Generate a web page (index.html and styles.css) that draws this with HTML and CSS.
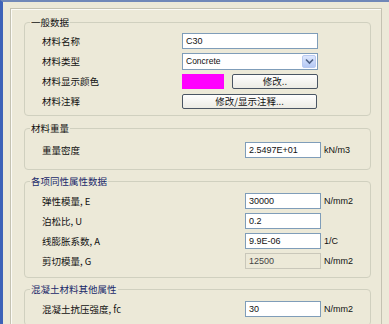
FILE: index.html
```html
<!DOCTYPE html>
<html lang="zh-CN">
<head>
    <meta charset="UTF-8">
    <title>材料属性数据</title>
    <link rel="stylesheet" href="styles.css">
</head>
<body>
    <div class="window">
        <div class="page">
            <fieldset class="group group-general">
                <legend>一般数据</legend>
                <div class="rows">
                    <div class="row">
                        <span class="label">材料名称</span>
                        <div class="field wide">C30</div>
                    </div>
                    <div class="row">
                        <span class="label">材料类型</span>
                        <div class="field wide combo">
                            <span>Concrete</span>
                            <span class="arrow">
                                <svg width="9" height="7" viewBox="0 0 9 7"><path d="M1 1.5 L4.5 5 L8 1.5" fill="none" stroke="#4d6185" stroke-width="1.6"/></svg>
                            </span>
                        </div>
                    </div>
                    <div class="row">
                        <span class="label">材料显示颜色</span>
                        <div class="swatch"></div>
                        <button class="btn btn-color">修改..</button>
                    </div>
                    <div class="row">
                        <span class="label">材料注释</span>
                        <button class="btn btn-wide">修改/显示注释...</button>
                    </div>
                </div>
            </fieldset>

            <fieldset class="group group-weight">
                <legend>材料重量</legend>
                <div class="rows">
                    <div class="row">
                        <span class="label label-long">重量密度</span>
                        <div class="field short">2.5497E+01</div>
                        <span class="unit">kN/m3</span>
                    </div>
                </div>
            </fieldset>

            <fieldset class="group group-iso">
                <legend>各项同性属性数据</legend>
                <div class="rows">
                    <div class="row">
                        <span class="label label-long">弹性模量, E</span>
                        <div class="field short">30000</div>
                        <span class="unit">N/mm2</span>
                    </div>
                    <div class="row">
                        <span class="label label-long">泊松比, U</span>
                        <div class="field short">0.2</div>
                    </div>
                    <div class="row">
                        <span class="label label-long">线膨胀系数, A</span>
                        <div class="field short">9.9E-06</div>
                        <span class="unit">1/C</span>
                    </div>
                    <div class="row">
                        <span class="label label-long">剪切模量, G</span>
                        <div class="field short disabled">12500</div>
                        <span class="unit">N/mm2</span>
                    </div>
                </div>
            </fieldset>

            <fieldset class="group group-concrete">
                <legend>混凝土材料其他属性</legend>
                <div class="rows">
                    <div class="row">
                        <span class="label label-long">混凝土抗压强度, fc</span>
                        <div class="field short">30</div>
                        <span class="unit">N/mm2</span>
                    </div>
                </div>
            </fieldset>
        </div>
    </div>
</body>
</html>
```

FILE: styles.css
```css
body {
    margin: 0;
    background-color: #ece9d8;
    font-family: "Noto Sans CJK SC", "DejaVu Sans", sans-serif;
    font-size: 9.5px;
    color: #111;
}

.window {
    box-sizing: border-box;
    width: 389px;
    height: 324px;
    overflow: hidden;
    background-color: #ece9d8;
    border-left: 3px solid #3d62b8;
    border-top: 2px solid #7088b8;
    padding: 6px 7px 0 7px;
}

.page {
    height: 400px;
    border: 1px solid #c4c2b2;
    box-shadow: inset 1px 1px 0 #fbfbf6;
    padding: 7px 10px 0 13px;
}

.group {
    margin: 0;
    padding: 0;
    border: 1px solid #d0d0bf;
    border-radius: 4px;
    min-width: 0;
}

.group legend {
    margin-left: 5px;
    padding: 0 1px;
    line-height: 12px;
    color: #1a2a6a;
}

.group-general legend,
.group-weight legend {
    color: #111;
}

.rows {
    padding-left: 17px;
}

.group-general .rows {
    padding-top: 3px;
    padding-bottom: 4px;
}

.group-weight {
    margin-top: 6px;
}

.group-weight .rows {
    padding-top: 6px;
    padding-bottom: 9px;
}

.group-iso {
    margin-top: 5px;
}

.group-iso .rows {
    padding-top: 4px;
    padding-bottom: 6px;
}

.group-concrete {
    margin-top: 5px;
}

.group-concrete .rows {
    padding-top: 4px;
    padding-bottom: 6px;
}

.row {
    display: flex;
    align-items: center;
    height: 20px;
}

.label {
    width: 140px;
    flex-shrink: 0;
    white-space: nowrap;
}

.label-long {
    width: 203px;
}

.field {
    box-sizing: border-box;
    height: 16px;
    border: 1px solid #7f9db9;
    background-color: #fff;
    font-family: "Liberation Sans", Arial, sans-serif;
    font-size: 9px;
    line-height: 14px;
    padding-left: 3px;
    white-space: nowrap;
}

.wide {
    width: 136px;
}

.short {
    width: 76px;
}

.disabled {
    background-color: #ece9d8;
    border-color: #c9c7ba;
    color: #444;
}

.combo {
    display: flex;
    align-items: center;
    justify-content: space-between;
    height: 17px;
    padding-right: 1px;
    font-size: 8.5px;
}

.arrow {
    display: flex;
    align-items: center;
    justify-content: center;
    width: 14px;
    height: 13px;
    border-radius: 2px;
    background: linear-gradient(#dde7fd, #b5c9f4);
    border: 1px solid #b9caf0;
    box-sizing: border-box;
}

.swatch {
    width: 42px;
    height: 15px;
    background-color: #ff00ff;
}

.btn {
    box-sizing: border-box;
    height: 15px;
    padding: 0;
    border: 1px solid #4a5563;
    border-radius: 2px;
    background: linear-gradient(#fefefe, #ecebe4);
    font-family: "Noto Sans CJK SC", "DejaVu Sans", sans-serif;
    font-size: 9.5px;
    line-height: 12px;
    color: #111;
}

.btn-color {
    width: 86px;
    margin-left: 8px;
}

.btn-wide {
    width: 135px;
}

.unit {
    margin-left: 3px;
    font-family: "Liberation Sans", Arial, sans-serif;
    font-size: 9px;
}
```
